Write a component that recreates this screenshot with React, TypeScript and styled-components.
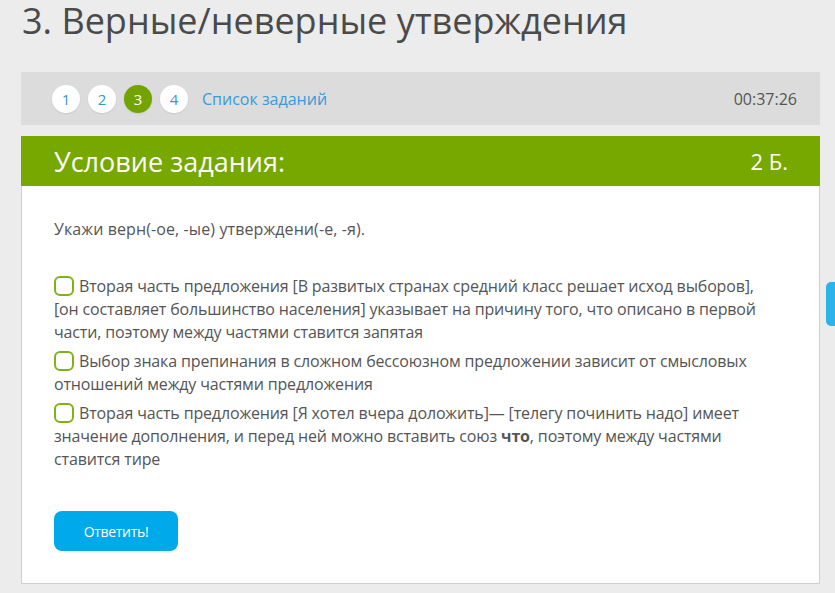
import React from "react";
import styled, { createGlobalStyle } from "styled-components";

const Global = createGlobalStyle`
  html, body { margin: 0; padding: 0; background: #ececec; }
  body { font-family: "Open Sans", "DejaVu Sans", sans-serif; overflow: hidden; }
`;

const Page = styled.div`
  width: 835px;
  height: 593px;
  box-sizing: border-box;
  padding: 0 15px 0 21px;
  position: relative;
  overflow: hidden;
`;

const Title = styled.h1`
  margin: 0;
  padding: 0 0 0 1px;
  height: 72px;
  font-size: 36px;
  font-weight: 400;
  line-height: 42px;
  color: #4a4a4a;
  white-space: nowrap;
`;

const NavBar = styled.div`
  height: 53px;
  background: #dcdcdc;
  display: flex;
  align-items: center;
  padding: 0 23px 0 31px;
  gap: 8px;
`;

const Circle = styled.div<{ $active?: boolean }>`
  width: 28px;
  height: 28px;
  border-radius: 50%;
  background: ${(p) => (p.$active ? "#72a300" : "#ffffff")};
  color: ${(p) => (p.$active ? "#ffffff" : "#3399cc")};
  display: flex;
  align-items: center;
  justify-content: center;
  font-size: 15px;
  box-shadow: 0 1px 2px rgba(0, 0, 0, 0.08);
`;

const ListLink = styled.a`
  margin-left: 6px;
  font-size: 16px;
  color: #3a9ad9;
  text-decoration: none;
`;

const Timer = styled.div`
  margin-left: auto;
  font-size: 16px;
  color: #555;
`;

const Card = styled.div`
  margin-top: 11px;
  border: 1px solid #cfcfcf;
  border-top: none;
  background: #fff;
  height: 448px;
  box-sizing: border-box;
`;

const CardHeader = styled.div`
  height: 50px;
  margin: 0 -1px;
  background: #76a800;
  color: #fff;
  display: flex;
  align-items: center;
  padding: 0 32px 0 33px;
  font-size: 27px;
`;

const Points = styled.span`
  margin-left: auto;
  font-size: 22px;
`;

const CardBody = styled.div`
  padding: 32px 40px 0 32px;
  color: #555;
`;

const Prompt = styled.p`
  margin: 0 0 35px;
  font-size: 16px;
  letter-spacing: 0.1px;
`;

const Option = styled.label`
  display: block;
  font-size: 16px;
  line-height: 23px;
  letter-spacing: -0.15px;
  margin-bottom: 6px;
`;

const Box = styled.span`
  display: inline-block;
  width: 16px;
  height: 16px;
  border: 2px solid #7fb21a;
  border-radius: 6px;
  vertical-align: -4px;
  margin-right: 5px;
`;

const Button = styled.button`
  margin-top: 34px;
  width: 124px;
  height: 40px;
  border: none;
  border-radius: 8px;
  background: #00a9ea;
  color: #fff;
  font-family: "Open Sans", sans-serif;
  font-size: 14px;
  letter-spacing: -0.3px;
`;

const SideTab = styled.div`
  position: absolute;
  right: 0;
  top: 282px;
  width: 9px;
  height: 44px;
  background: #2cb3ea;
  border-radius: 5px 0 0 5px;
`;

export default function App() {
  return (
    <>
      <Global />
      <Page>
        <Title>3. Верные/неверные утверждения</Title>
        <NavBar>
          <Circle>1</Circle>
          <Circle>2</Circle>
          <Circle $active>3</Circle>
          <Circle>4</Circle>
          <ListLink>Список заданий</ListLink>
          <Timer>00:37:26</Timer>
        </NavBar>
        <Card>
          <CardHeader>
            Условие задания:
            <Points>2 Б.</Points>
          </CardHeader>
          <CardBody>
            <Prompt>Укажи верн(-ое, -ые) утверждени(-е, -я).</Prompt>
            <Option>
              <Box />
              Вторая часть предложения [В развитых странах средний класс решает исход выборов], [он составляет большинство населения] указывает на причину того, что описано в первой части, поэтому между частями ставится запятая
            </Option>
            <Option>
              <Box />
              Выбор знака препинания в сложном бессоюзном предложении зависит от смысловых отношений между частями предложения
            </Option>
            <Option>
              <Box />
              Вторая часть предложения [Я хотел вчера доложить]— [телегу починить надо] имеет значение дополнения, и перед ней можно вставить союз <b>что</b>, поэтому между частями ставится тире
            </Option>
            <Button>Ответить!</Button>
          </CardBody>
        </Card>
        <SideTab />
      </Page>
    </>
  );
}
